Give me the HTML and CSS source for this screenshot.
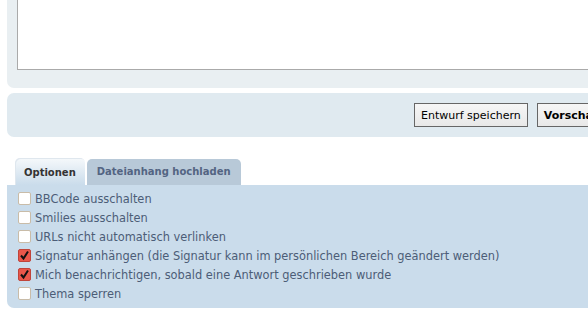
FILE: index.html
```html
<!DOCTYPE html>
<html lang="de">

<head>
    <meta charset="UTF-8">
    <title>Beitrag schreiben</title>
    <link rel="stylesheet" href="styles.css">
</head>

<body>
    <div class="page">
        <div class="panel message-panel">
            <textarea class="message-box"></textarea>
        </div>

        <div class="panel submit-panel">
            <button class="button">Entwurf speichern</button>
            <button class="button primary">Vorschau</button>
            <button class="button primary">Absenden</button>
        </div>

        <ul class="tabs">
            <li class="tab active">Optionen</li>
            <li class="tab">Dateianhang hochladen</li>
        </ul>

        <div class="panel options-panel">
            <label class="option"><input type="checkbox"> BBCode ausschalten</label>
            <label class="option"><input type="checkbox"> Smilies ausschalten</label>
            <label class="option"><input type="checkbox"> URLs nicht automatisch verlinken</label>
            <label class="option"><input type="checkbox" checked> Signatur anhängen (die Signatur kann im persönlichen Bereich geändert werden)</label>
            <label class="option"><input type="checkbox" checked> Mich benachrichtigen, sobald eine Antwort geschrieben wurde</label>
            <label class="option"><input type="checkbox"> Thema sperren</label>
        </div>
    </div>
</body>

</html>
```

FILE: styles.css
```css
body {
    margin: 0;
    background: #fff;
    font-family: "DejaVu Sans", Verdana, sans-serif;
    font-size: 11px;
    overflow: hidden;
}

.page {
    width: 700px;
    padding-left: 7px;
}

.panel {
    border-radius: 7px;
}

.message-panel {
    margin-top: -30px;
    padding: 10px 10px 18px 10px;
    background-color: #e9eff2;
}

.message-box {
    display: block;
    box-sizing: border-box;
    width: 100%;
    height: 90px;
    margin: 0;
    border: 1px solid #aaa;
    background: #fff;
    resize: none;
}

.submit-panel {
    display: flex;
    gap: 9px;
    margin-top: 5px;
    height: 44px;
    padding-left: 407px;
    align-items: center;
    background-color: #e0eaf0;
}

.button {
    height: 24px;
    padding: 0 6px;
    border: 1px solid #666;
    background: linear-gradient(#f6f6f6, #e8e8e8);
    font-family: "DejaVu Sans", Verdana, sans-serif;
    font-size: 11px;
    color: #000;
}

.button.primary {
    font-weight: bold;
}

.tabs {
    display: flex;
    gap: 2px;
    list-style: none;
    margin: 21px 0 0 8px;
    padding: 0;
    align-items: flex-end;
}

.tab {
    height: 26px;
    padding: 0 10px;
    line-height: 25px;
    font-size: 10px;
    font-weight: bold;
    color: #536482;
    background-color: #b8c9d8;
    border-radius: 5px 5px 0 0;
}

.tab.active {
    height: 27px;
    padding: 0 9px;
    line-height: 30px;
    color: #333;
    background: linear-gradient(#f6f9fb, #cadceb);
    box-shadow: inset 1px 1px 0 #dfe7ee;
}

.options-panel {
    padding: 4px 0 5px 11px;
    background-color: #cadceb;
    border-top-left-radius: 0;
}

.option {
    display: flex;
    align-items: center;
    height: 19px;
    font-size: 11.4px;
    color: #4c5d77;
    white-space: nowrap;
}

.option input {
    appearance: none;
    -webkit-appearance: none;
    box-sizing: border-box;
    width: 13px;
    height: 13px;
    margin: 0 4px 0 0;
    border: 1px solid #c9bca8;
    border-radius: 2px;
    background: #fff;
}

.option input:checked {
    border-color: #c0443a;
    background: #e8574a url("data:image/svg+xml,%3Csvg xmlns='http://www.w3.org/2000/svg' viewBox='0 0 13 13'%3E%3Cpath d='M3 6.5l2.5 3L10 2.5' fill='none' stroke='%23111' stroke-width='2'/%3E%3C/svg%3E") center / 13px 13px no-repeat;
}
```
